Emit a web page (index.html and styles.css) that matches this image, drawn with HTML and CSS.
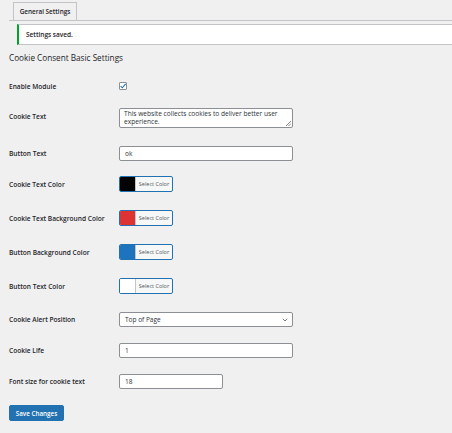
FILE: index.html
```html
<!DOCTYPE html>
<html lang="en">
<head>
    <meta charset="UTF-8">
    <meta name="viewport" content="width=device-width, initial-scale=1.0">
    <title>Cookie Consent Settings</title>
    <link rel="stylesheet" href="styles.css">
</head>
<body>
    <div class="wrap">
        <nav class="nav-tabs">
            <a class="nav-tab active">General Settings</a>
        </nav>

        <div class="notice">
            <p>Settings saved.</p>
        </div>

        <h2 class="section-title">Cookie Consent Basic Settings</h2>

        <form class="settings-form">
            <div class="row row-check">
                <label class="row-label">Enable Module</label>
                <span class="checkbox checked">
                    <svg viewBox="0 0 8 8" width="8" height="8"><path d="M1.6 4.2 L3.3 5.8 L6.6 1.8" fill="none" stroke="#2271b1" stroke-width="1.1"/></svg>
                </span>
            </div>

            <div class="row row-textarea">
                <label class="row-label">Cookie Text</label>
                <div class="textarea">This website collects cookies to deliver better user experience.
                    <svg class="grip" viewBox="0 0 6 6" width="6" height="6"><path d="M1 6 L6 1 M3.5 6 L6 3.5" stroke="#555" stroke-width="0.7"/></svg>
                </div>
            </div>

            <div class="row row-input">
                <label class="row-label">Button Text</label>
                <div class="input">ok</div>
            </div>

            <div class="row row-color first-color">
                <label class="row-label">Cookie Text Color</label>
                <div class="color-picker">
                    <span class="swatch" style="background: #000000;"></span>
                    <span class="picker-text">Select Color</span>
                </div>
            </div>

            <div class="row row-color">
                <label class="row-label">Cookie Text Background Color</label>
                <div class="color-picker">
                    <span class="swatch" style="background: #dd3333;"></span>
                    <span class="picker-text">Select Color</span>
                </div>
            </div>

            <div class="row row-color">
                <label class="row-label">Button Background Color</label>
                <div class="color-picker">
                    <span class="swatch" style="background: #1e73be;"></span>
                    <span class="picker-text">Select Color</span>
                </div>
            </div>

            <div class="row row-color">
                <label class="row-label">Button Text Color</label>
                <div class="color-picker">
                    <span class="swatch" style="background: #ffffff;"></span>
                    <span class="picker-text">Select Color</span>
                </div>
            </div>

            <div class="row row-select">
                <label class="row-label">Cookie Alert Position</label>
                <div class="input select">
                    <span>Top of Page</span>
                    <svg viewBox="0 0 6 4" width="6" height="4"><path d="M0.8 0.8 L3 3 L5.2 0.8" fill="none" stroke="#50575e" stroke-width="0.8"/></svg>
                </div>
            </div>

            <div class="row row-input">
                <label class="row-label">Cookie Life</label>
                <div class="input">1</div>
            </div>

            <div class="row row-input">
                <label class="row-label">Font size for cookie text</label>
                <div class="input small">18</div>
            </div>

            <div class="submit">
                <button type="button" class="button-primary">Save Changes</button>
            </div>
        </form>
    </div>
</body>
</html>
```

FILE: styles.css
```css
html, body {
    margin: 0;
    padding: 0;
    overflow: hidden;
}
body {
    background: #f0f0f1;
    color: #1d2327;
    font-family: "Open Sans", "Noto Sans", sans-serif;
    width: 452px;
    height: 433px;
}
.wrap {
    padding: 2px 0 0 9px;
}
.nav-tabs {
    display: flex;
    border-bottom: 1px solid #c3c4c7;
    padding-left: 4px;
    height: 18px;
}
.nav-tab {
    display: block;
    width: 64px;
    height: 18px;
    box-sizing: border-box;
    border: 1px solid #c3c4c7;
    border-bottom: none;
    font-size: 6.4px;
    font-weight: 600;
    line-height: 17px;
    text-align: center;
    color: #1d2327;
}
.notice {
    margin: 3px -20px 0 8px;
    height: 21px;
    box-sizing: border-box;
    background: #fff;
    border: 1px solid #c3c4c7;
    border-left: 2px solid #00a32a;
    display: flex;
    align-items: center;
    padding-left: 7px;
}
.notice p {
    margin: 0;
    font-size: 6.5px;
    font-weight: 600;
}
.section-title {
    margin: 8px 0 0 0;
    font-size: 8.2px;
    font-weight: 500;
    line-height: 10px;
    color: #1d2327;
}
.settings-form {
    margin-top: 19px;
}
.row {
    display: flex;
    align-items: center;
}
.row-label {
    width: 110px;
    flex: none;
    font-size: 6.6px;
    font-weight: 600;
    color: #1d2327;
}
.row-check {
    height: 8px;
    margin-bottom: 18px;
}
.checkbox {
    width: 8px;
    height: 8px;
    box-sizing: border-box;
    border: 1px solid #8c8f94;
    border-radius: 1px;
    background: #fff;
    position: relative;
}
.checkbox svg {
    position: absolute;
    left: -1px;
    top: -1px;
}
.row-textarea {
    align-items: flex-start;
    margin-bottom: 18px;
}
.row-textarea .row-label {
    padding-top: 4px;
}
.textarea {
    position: relative;
    width: 174px;
    height: 20px;
    box-sizing: border-box;
    background: #fff;
    border: 1px solid #8c8f94;
    border-radius: 2px;
    padding: 1px 4px;
    font-size: 6.6px;
    line-height: 7.5px;
    color: #2c3338;
}
.grip {
    position: absolute;
    right: 1px;
    bottom: 1px;
}
.input {
    width: 174px;
    height: 15px;
    box-sizing: border-box;
    background: #fff;
    border: 1px solid #8c8f94;
    border-radius: 2px;
    padding: 0 5px;
    font-size: 6.5px;
    line-height: 13px;
    color: #2c3338;
}
.input.small {
    width: 104px;
}
.row-input {
    margin-bottom: 16px;
}
.row-select {
    margin-bottom: 16px;
}
.select {
    display: flex;
    justify-content: space-between;
    align-items: center;
    padding-right: 4px;
}
.row-color {
    margin-bottom: 18px;
}
.row-color.first-color {
    margin-bottom: 18px;
}
.row-input + .row-color {
    margin-top: -1px;
}
.color-picker {
    display: flex;
    width: 54px;
    height: 16px;
    box-sizing: border-box;
    border: 1px solid #2271b1;
    border-radius: 2px;
    background: #f6f7f7;
    overflow: hidden;
}
.swatch {
    width: 15px;
    height: 100%;
    border-right: 1px solid #c3c4c7;
}
.picker-text {
    flex: 1;
    font-size: 5.5px;
    line-height: 14px;
    text-align: center;
    color: #50575e;
}
.submit {
    margin-top: 6px;
}
.button-primary {
    display: block;
    width: 55px;
    height: 16px;
    padding: 0;
    border: 1px solid #2271b1;
    border-radius: 2px;
    background: #2271b1;
    color: #fff;
    font-family: inherit;
    font-size: 6.3px;
    font-weight: 600;
}
```
